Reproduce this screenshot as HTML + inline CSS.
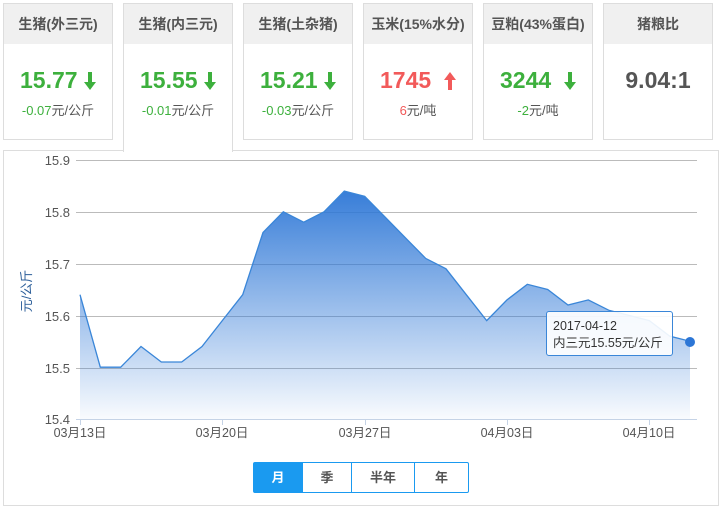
<!DOCTYPE html>
<html><head><meta charset="utf-8"><style>
body{margin:0;width:724px;height:508px;background:#fff;font-family:"Liberation Sans","Noto Sans CJK SC",sans-serif;position:relative;overflow:hidden}
.card{position:absolute;top:3px;width:108px;height:135px;border:1px solid #ddd;background:#fff}
.card .h{height:40px;background:#f0f0f0;text-align:center;line-height:40px;font-size:14px;font-weight:bold;color:#555}
.card .v{text-align:center;font-size:23px;font-weight:bold;margin-top:22px;height:28px;line-height:28px}
.card .v svg{vertical-align:-2px}
.card .s{text-align:center;font-size:13px;color:#555;margin-top:6px}
.g{color:#3db03d}.r{color:#f25a5a}
.act{height:148px;border-bottom:none;z-index:2}
.panel{position:absolute;left:3px;top:150px;width:714px;height:354px;border:1px solid #ddd}
.btns{position:absolute;left:253px;top:462px;height:29px;border:1px solid #1a9af0;border-radius:2px;display:flex;font-size:13px;font-weight:bold;color:#555}
.btns div{line-height:29px;text-align:center;border-left:1px solid #1a9af0}
.btns div:first-child{border-left:none;background:#1a9af0;color:#fff}
.tip{position:absolute;left:546px;top:311px;width:127px;height:45px;border:1px solid #3a86d8;border-radius:3px;background:rgba(255,255,255,.9);font-size:12.5px;color:#333;padding:0 0 0 6px;box-sizing:border-box;line-height:17px;padding-top:6px}
</style></head><body>
<div class="card" style="left:3px"><div class="h">生猪(外三元)</div><div class="v g">15.77 <svg width="12" height="18" viewBox="0 0 12 18"><path d="M4,0H8V10H12L6,18L0,10H4Z" fill="#3db03d"/></svg></div><div class="s"><span class="g">-0.07</span>元/公斤</div></div>
<div class="card act" style="left:123px"><div class="h">生猪(内三元)</div><div class="v g">15.55 <svg width="12" height="18" viewBox="0 0 12 18"><path d="M4,0H8V10H12L6,18L0,10H4Z" fill="#3db03d"/></svg></div><div class="s"><span class="g">-0.01</span>元/公斤</div></div>
<div class="card" style="left:243px"><div class="h">生猪(土杂猪)</div><div class="v g">15.21 <svg width="12" height="18" viewBox="0 0 12 18"><path d="M4,0H8V10H12L6,18L0,10H4Z" fill="#3db03d"/></svg></div><div class="s"><span class="g">-0.03</span>元/公斤</div></div>
<div class="card" style="left:363px"><div class="h">玉米(15%水分)</div><div class="v r">1745 &nbsp;<svg width="12" height="18" viewBox="0 0 12 18"><path d="M4,18H8V8H12L6,0L0,8H4Z" fill="#f25a5a"/></svg></div><div class="s"><span class="r">6</span>元/吨</div></div>
<div class="card" style="left:483px"><div class="h">豆粕(43%蛋白)</div><div class="v g">3244 &nbsp;<svg width="12" height="18" viewBox="0 0 12 18"><path d="M4,0H8V10H12L6,18L0,10H4Z" fill="#3db03d"/></svg></div><div class="s"><span class="g">-2</span>元/吨</div></div>
<div class="card" style="left:603px"><div class="h">猪粮比</div><div class="v" style="color:#555">9.04:1</div></div>
<div class="panel"></div>
<svg style="position:absolute;left:0;top:0" width="724" height="508">
<defs><linearGradient id="gr2" gradientUnits="userSpaceOnUse" x1="0" y1="190" x2="0" y2="419"><stop offset="0" stop-color="#2c76d6" stop-opacity=".95"/><stop offset="1" stop-color="#2c76d6" stop-opacity=".03"/></linearGradient></defs>
<g stroke="#bbb" stroke-width="1">
<line x1="76" y1="160.5" x2="697" y2="160.5"/><line x1="76" y1="212.5" x2="697" y2="212.5"/><line x1="76" y1="264.5" x2="697" y2="264.5"/><line x1="76" y1="316.5" x2="697" y2="316.5"/><line x1="76" y1="368.5" x2="697" y2="368.5"/></g>
<path d="M80,294.7 L100.3,367.2 L120.7,367.2 L141,346.5 L161.3,362 L181.7,362 L202,346.5 L222.3,320.6 L242.7,294.7 L263,232.5 L283.3,211.8 L303.7,222.2 L324,211.8 L344.3,191.1 L364.7,196.3 L385,217 L405.3,237.7 L425.7,258.4 L446,268.8 L466.3,294.7 L486.7,320.6 L507,299.9 L527.3,284.3 L547.7,289.5 L568,305 L588.3,299.9 L608.7,310.2 L629,315.4 L649.3,320.6 L669.7,336.1 L690,341.3 L690,419 L80,419 Z" fill="url(#gr2)"/>
<path d="M80,294.7 L100.3,367.2 L120.7,367.2 L141,346.5 L161.3,362 L181.7,362 L202,346.5 L222.3,320.6 L242.7,294.7 L263,232.5 L283.3,211.8 L303.7,222.2 L324,211.8 L344.3,191.1 L364.7,196.3 L385,217 L405.3,237.7 L425.7,258.4 L446,268.8 L466.3,294.7 L486.7,320.6 L507,299.9 L527.3,284.3 L547.7,289.5 L568,305 L588.3,299.9 L608.7,310.2 L629,315.4 L649.3,320.6 L669.7,336.1 L690,341.3" fill="none" stroke="#3a86d8" stroke-width="1.3"/>
<line x1="76" y1="419.5" x2="697" y2="419.5" stroke="#c5d3e6"/>
<g stroke="#c5d3e6"><line x1="80.5" y1="419" x2="80.5" y2="425"/><line x1="222.5" y1="419" x2="222.5" y2="425"/><line x1="365.5" y1="419" x2="365.5" y2="425"/><line x1="507.5" y1="419" x2="507.5" y2="425"/><line x1="649.5" y1="419" x2="649.5" y2="425"/></g>
<circle cx="690" cy="342" r="5" fill="#2c76d6"/>
<g font-size="13" fill="#555" text-anchor="end" font-family="Liberation Sans,sans-serif"><text x="70" y="165">15.9</text><text x="70" y="217">15.8</text><text x="70" y="269">15.7</text><text x="70" y="321">15.6</text><text x="70" y="373">15.5</text><text x="70" y="424">15.4</text></g>
<g font-size="12.5" fill="#555" text-anchor="middle" font-family="Liberation Sans,Noto Sans CJK SC,sans-serif"><text x="80" y="437">03月13日</text><text x="222" y="437">03月20日</text><text x="365" y="437">03月27日</text><text x="507" y="437">04月03日</text><text x="649" y="437">04月10日</text></g>
<text transform="translate(31,291) rotate(-90)" text-anchor="middle" font-size="13" fill="#2d5f9a" font-family="Liberation Sans,Noto Sans CJK SC,sans-serif">元/公斤</text>
</svg>
<div class="tip">2017-04-12<br>内三元15.55元/公斤</div>
<div class="btns"><div style="width:48px">月</div><div style="width:48px">季</div><div style="width:62px">半年</div><div style="width:53px">年</div></div>
</body></html>
